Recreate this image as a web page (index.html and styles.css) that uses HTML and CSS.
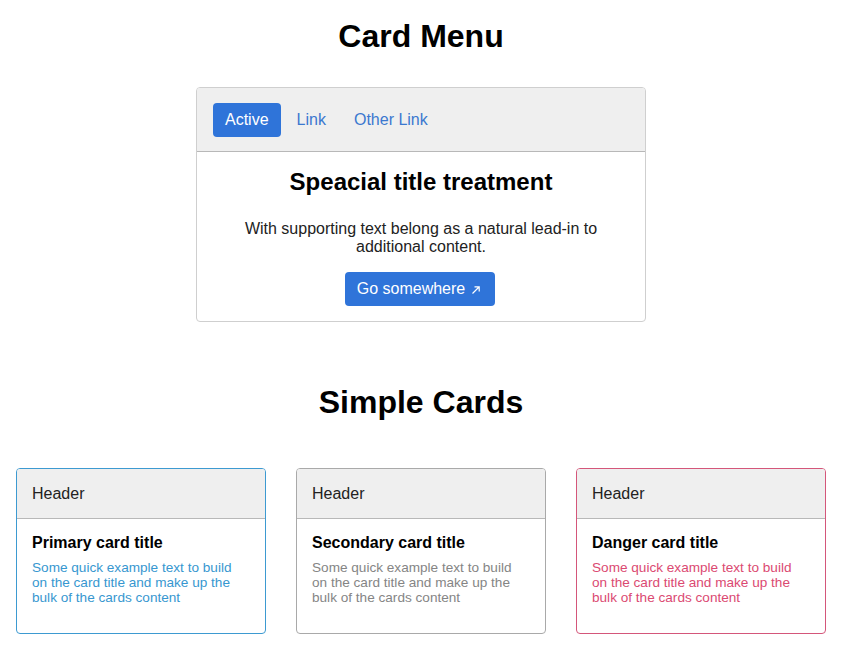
FILE: index.html
```html
<!DOCTYPE html>
<html>
<head>
<meta charset="utf-8">
<link rel="stylesheet" href="styles.css">
</head>
<body>
<main class="page">
  <h1 class="page-title">Card Menu</h1>
  <section class="menu-card">
    <nav class="menu-card-header">
      <a class="nav-item nav-active">Active</a>
      <a class="nav-item">Link</a>
      <a class="nav-item">Other Link</a>
    </nav>
    <div class="menu-card-body">
      <h2 class="menu-card-title">Speacial title treatment</h2>
      <p class="menu-card-text">With supporting text belong as a natural lead-in to additional content.</p>
      <a class="btn">Go somewhere <svg class="btn-arrow" width="14" height="14" viewBox="0 0 14 14"><path d="M3.5 10.5 L10 4 M5.5 3.8 H10.2 V8.5" fill="none" stroke="#fff" stroke-width="1.2"/></svg></a>
    </div>
  </section>

  <h1 class="page-title section-title">Simple Cards</h1>
  <div class="card-row">
    <div class="card card-primary">
      <div class="card-header">Header</div>
      <div class="card-body">
        <h3 class="card-title">Primary card title</h3>
        <p class="card-text">Some quick example text to build on the card title and make up the bulk of the cards content</p>
      </div>
    </div>
    <div class="card card-secondary">
      <div class="card-header">Header</div>
      <div class="card-body">
        <h3 class="card-title">Secondary card title</h3>
        <p class="card-text">Some quick example text to build on the card title and make up the bulk of the cards content</p>
      </div>
    </div>
    <div class="card card-danger">
      <div class="card-header">Header</div>
      <div class="card-body">
        <h3 class="card-title">Danger card title</h3>
        <p class="card-text">Some quick example text to build on the card title and make up the bulk of the cards content</p>
      </div>
    </div>
  </div>
</main>
</body>
</html>
```

FILE: styles.css
```css
html, body {
  margin: 0;
  padding: 0;
  background: #fff;
}
body {
  font-family: "Liberation Sans", Arial, sans-serif;
  color: #111;
}
.page {
  width: 842px;
  padding: 18px 0 0;
  display: flex;
  flex-direction: column;
  align-items: center;
}
.page-title {
  margin: 0;
  font-size: 32px;
  line-height: 37px;
  font-weight: bold;
  color: #000;
  text-align: center;
}
.section-title {
  margin-top: 62px;
}
.menu-card {
  margin-top: 32px;
  width: 448px;
  border: 1px solid #cfcfcf;
  border-radius: 4px;
  overflow: hidden;
}
.menu-card-header {
  display: flex;
  gap: 4px;
  padding: 15px 16px 14px;
  background: #efefef;
  border-bottom: 1px solid #b8b8b8;
}
.nav-item {
  display: block;
  padding: 8px 12px;
  font-size: 16px;
  line-height: 18px;
  color: #3b78cf;
  border-radius: 4px;
}
.nav-active {
  background: #2f74d9;
  color: #fff;
}
.menu-card-body {
  padding: 16px 16px 15px;
  display: flex;
  flex-direction: column;
  align-items: center;
  text-align: center;
}
.menu-card-title {
  margin: 0 0 24px;
  font-size: 24px;
  line-height: 28px;
  color: #000;
}
.menu-card-text {
  margin: 0 0 16px;
  width: 380px;
  font-size: 16px;
  line-height: 18px;
  color: #222;
}
.btn {
  display: flex;
  align-items: center;
  height: 34px;
  box-sizing: border-box;
  padding: 0 12px;
  margin-right: 2px;
  background: #2f74d9;
  color: #fff;
  font-size: 16px;
  border-radius: 4px;
}
.btn-arrow {
  margin-left: 4px;
  margin-top: 1px;
}
.card-row {
  margin-top: 47px;
  display: grid;
  grid-template-columns: repeat(3, 250px);
  gap: 30px;
}
.card {
  box-sizing: border-box;
  height: 166px;
  border: 1px solid #aaa;
  border-radius: 4px;
  overflow: hidden;
}
.card-header {
  padding: 15px 15px 15px;
  font-size: 16px;
  line-height: 19px;
  color: #222;
  background: #efefef;
  border-bottom: 1px solid #b8b8b8;
}
.card-body {
  padding: 15px 15px 16px;
}
.card-title {
  margin: 0 0 8px;
  font-size: 16px;
  line-height: 18px;
  color: #000;
}
.card-text {
  margin: 0;
  font-size: 13.6px;
  line-height: 15px;
}
.card-primary {
  border-color: #3d9ad1;
}
.card-primary .card-text {
  color: #3797d0;
}
.card-secondary {
  border-color: #a9a9a9;
}
.card-secondary .card-text {
  color: #858585;
}
.card-danger {
  border-color: #d4567a;
}
.card-danger .card-text {
  color: #db4a72;
}
```
